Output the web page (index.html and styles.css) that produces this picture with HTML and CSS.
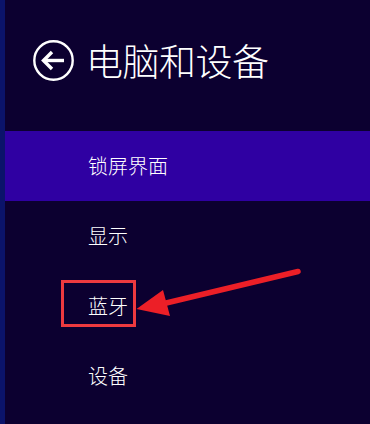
FILE: index.html
```html
<!DOCTYPE html>
<html lang="zh-CN">
<head>
<meta charset="utf-8">
<title>电脑和设备</title>
<link rel="stylesheet" href="styles.css">
</head>
<body>
<div class="page">
  <header class="header">
    <svg class="back" width="41" height="41" viewBox="0 0 41 41" aria-hidden="true">
      <circle cx="20.5" cy="20.5" r="19.2" fill="none" stroke="#fff" stroke-width="2.4"/>
      <path d="M10.5 20.5 H31" fill="none" stroke="#fff" stroke-width="3.4"/>
      <path d="M19 12 L10.5 20.5 L19 29" fill="none" stroke="#fff" stroke-width="3.4" stroke-linejoin="miter"/>
    </svg>
    <h1 class="title">电脑和设备</h1>
  </header>
  <nav class="menu">
    <div class="item selected">锁屏界面</div>
    <div class="item">显示</div>
    <div class="item">蓝牙</div>
    <div class="item">设备</div>
  </nav>
  <svg class="annot" width="370" height="424" viewBox="0 0 370 424" aria-hidden="true">
    <rect x="62.5" y="281.5" width="72" height="44" fill="none" stroke="#ee3a3f" stroke-width="3"/>
    <path d="M298 271.5 L162 304" fill="none" stroke="#ec1f27" stroke-width="5.5" stroke-linecap="round"/>
    <path d="M136.5 309 L163 290 L170 316 Z" fill="#ec1f27"/>
  </svg>
</div>
</body>
</html>
```
FILE: styles.css
```css
html, body {
  margin: 0;
  padding: 0;
}
body {
  background: #0c0030;
  font-family: "Noto Sans CJK SC", "Noto Sans", sans-serif;
  color: #ffffff;
}
.page {
  position: relative;
  width: 370px;
  height: 424px;
  box-sizing: border-box;
  border-left: 5px solid #0b136a;
  overflow: hidden;
}
.header {
  height: 131px;
  box-sizing: border-box;
  padding: 40px 0 0 28px;
  display: flex;
  align-items: flex-start;
  gap: 12px;
}
.back {
  display: block;
  flex: none;
}
.title {
  margin: 0;
  font-size: 37px;
  font-weight: 300;
  line-height: 40px;
  letter-spacing: -0.5px;
}
.menu {
  display: flex;
  flex-direction: column;
}
.item {
  height: 70px;
  display: flex;
  align-items: center;
  padding-left: 83px;
  font-size: 20px;
  font-weight: 300;
  line-height: 24px;
}
.item.selected {
  background: #2f00a2;
}
.annot {
  position: absolute;
  left: -5px;
  top: 0;
  pointer-events: none;
}
```
